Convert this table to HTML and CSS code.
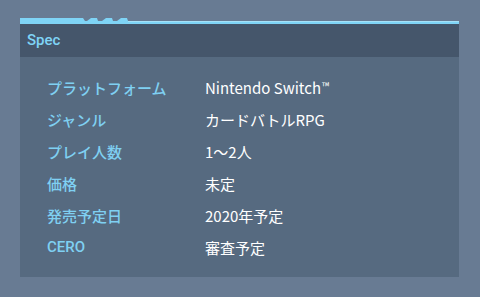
FILE: index.html
```html
<!DOCTYPE html>
<html lang="ja">
<head>
<meta charset="utf-8">
<link rel="stylesheet" href="styles.css">
</head>
<body>
<section class="panel">
  <svg class="stripe" width="439" height="6" viewBox="0 0 439 6">
    <polygon points="0,0 63,0 65,3 439,3 439,6 0,6" fill="#7fd4f6"/>
    <polygon points="67,3 71,0 77,0 78,3" fill="#7fd4f6"/>
    <polygon points="82,3 86,0 92,0 93,3" fill="#7fd4f6"/>
    <polygon points="97,3 101,0 107,0 108,3" fill="#7fd4f6"/>
    <rect x="108" y="3" width="331" height="1" fill="#a6e2f8"/>
  </svg>
  <header class="head">Spec</header>
  <dl class="spec">
    <div class="row"><dt>プラットフォーム</dt><dd>Nintendo Switch<span class="tm">™</span></dd></div>
    <div class="row"><dt>ジャンル</dt><dd>カードバトルRPG</dd></div>
    <div class="row"><dt>プレイ人数</dt><dd>1～2人</dd></div>
    <div class="row"><dt>価格</dt><dd>未定</dd></div>
    <div class="row"><dt>発売予定日</dt><dd>2020年予定</dd></div>
    <div class="row"><dt>CERO</dt><dd>審査予定</dd></div>
  </dl>
</section>
</body>
</html>
```
FILE: styles.css
```css
html, body {
  margin: 0;
  padding: 0;
}
body {
  background: #687b93;
  width: 480px;
  height: 297px;
  overflow: hidden;
  font-family: Roboto, "Noto Sans CJK JP", sans-serif;
}
.panel {
  margin: 18px 0 0 20px;
  width: 439px;
}
.stripe {
  display: block;
}
.head {
  height: 33px;
  box-sizing: border-box;
  background: #45566b;
  color: #7fd4f6;
  font-weight: 500;
  font-size: 15px;
  line-height: 33px;
  padding-left: 7px;
}
.spec {
  margin: 0;
  background: #566a80;
  padding: 14px 0 14px 27px;
}
.row {
  display: flex;
  height: 32px;
  align-items: center;
  font-size: 15px;
}
.row dt {
  width: 158px;
  color: #7fd0f2;
  font-weight: 500;
}
.row dd {
  margin: 0;
  color: #ffffff;
  font-family: "Noto Sans CJK JP", sans-serif;
}
.tm {
  font-size: 10px;
  vertical-align: 4px;
  margin-left: 1px;
}
```
